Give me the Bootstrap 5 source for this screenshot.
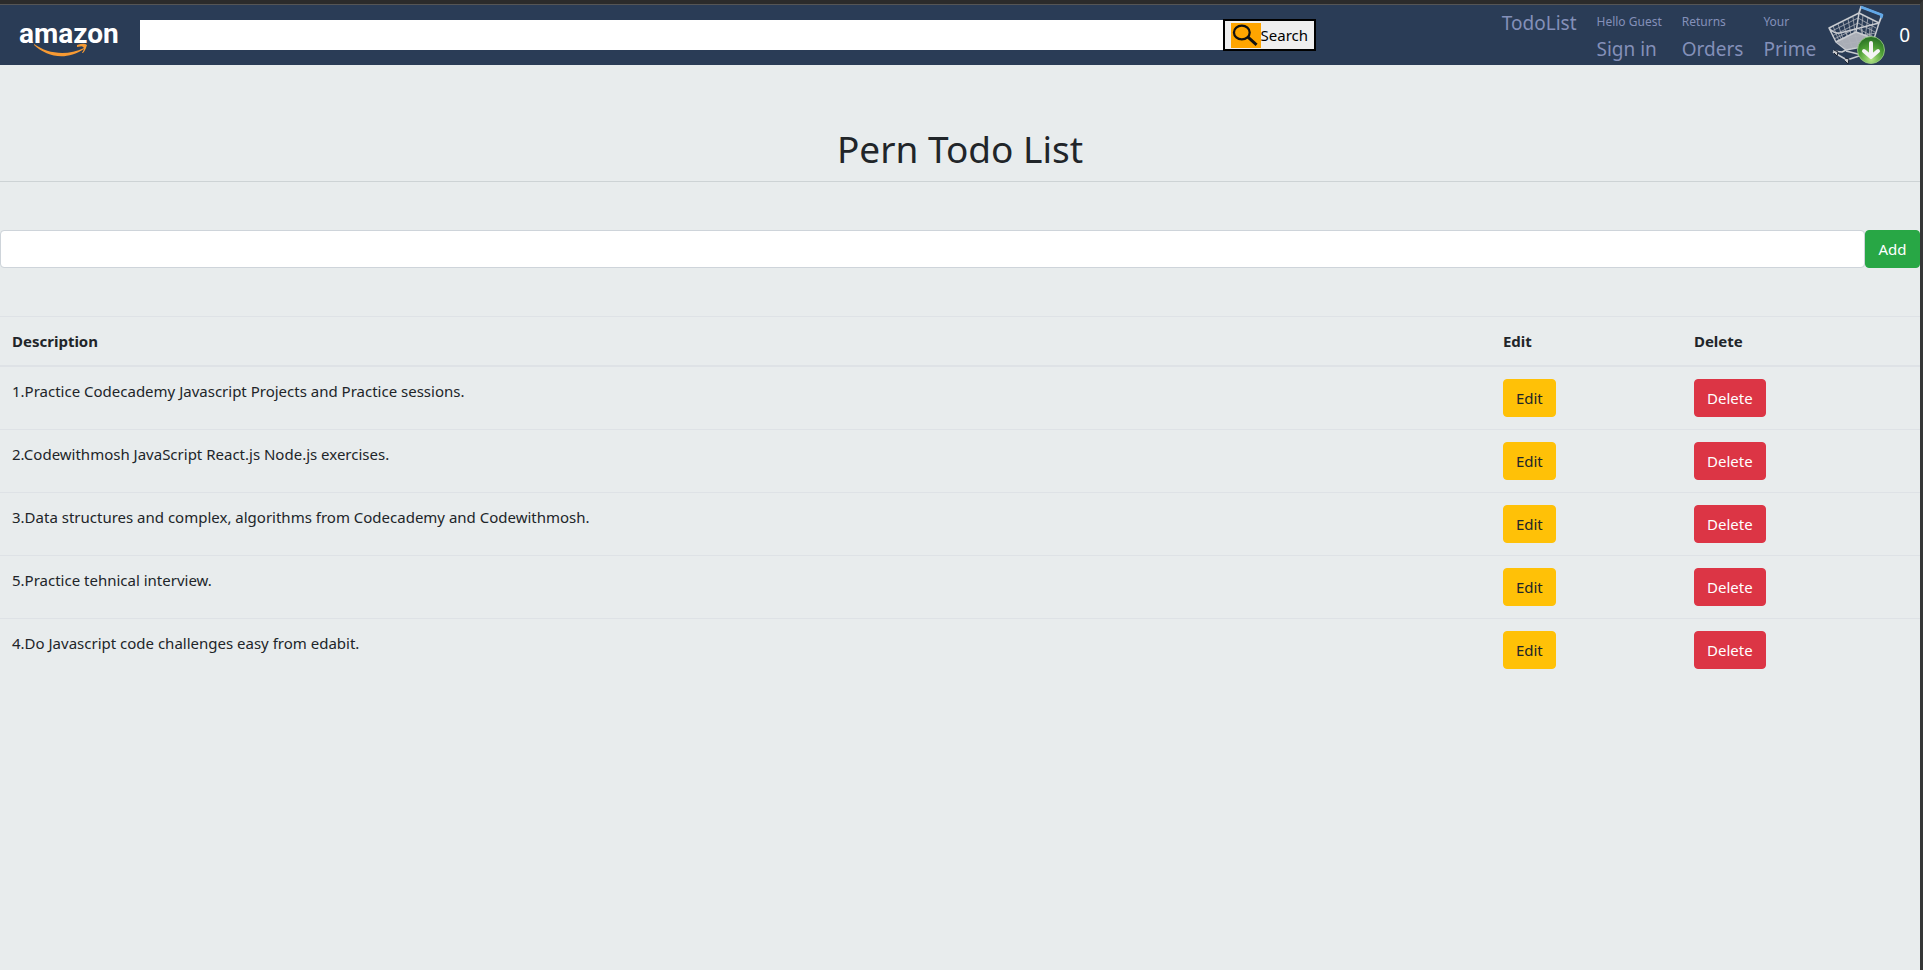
<!DOCTYPE html>
<html lang="en">
<head>
<meta charset="utf-8">
<meta name="viewport" content="width=device-width, initial-scale=1">
<title>Pern Todo List</title>
<link rel="stylesheet" href="https://cdn.jsdelivr.net/npm/bootstrap@5.3.0/dist/css/bootstrap.min.css">
<style>
  body {
    font-family: "Noto Sans", "Open Sans", sans-serif;
    font-size: 15px;
    line-height: 24px;
    color: #212529;
    background: #e8eced;
    min-height: 100vh;
    border-top: 4px solid #2b2b2b;
    border-right: 3px solid #353737;
  }
  .site-header { height: 61px; background: #2a3c56; border-top: 1px solid #555; }
  .brand { width: 140px; padding-left: 18px; }
  .brand text { font: bold 28px Roboto, "Liberation Sans", sans-serif; fill: #fff; }
  .site-search { width: 61.25%; }
  .site-search input { height: 30px; border: 0; background: #fff; outline-offset: -2px; }
  .site-search button { height: 32px; width: 93px; border: 2px solid #000; background: #efefef; color: #000; padding: 0 6px; }
  .site-search svg { background: orange; }
  .site-links { gap: 20px; margin-right: 12px; padding-top: 4px; }
  .site-links a { color: #8490b9; text-decoration: none; font-size: 19px; line-height: 28px; }
  .site-links small { display: block; font-size: 12px; line-height: 26px; }
  .cart-link { gap: 13px; margin-right: 10px; }
  .site-header .cart-link { color: #fff; text-decoration: none; font-size: 19px; }
  .page-title { font-size: 37px; line-height: 48px; font-weight: 400; border-bottom: 1px solid #cdd3d5; padding-bottom: 8px; margin: 60px 0 48px; }
  .btn, .form-control { font-size: 15px; line-height: 24px; border-radius: 4px; }
  .form-control { border-color: #ced4da; }
  .btn-success { background: #28a745; border-color: #28a745; width: 55px; padding-left: 0; padding-right: 0; }
  .btn-danger { background: #dc3545; width: 72px; padding-left: 0; padding-right: 0; }
  .btn-warning { color: #212529; width: 53px; padding-left: 0; padding-right: 0; }
  .todo-table { --bs-table-bg: transparent; color: #212529; table-layout: fixed; }
  .todo-table th, .todo-table td { padding: 12px; border: 0 solid #dee2e6; border-top-width: 1px; vertical-align: top; }
  .todo-table thead th { border-bottom-width: 2px; }
  .todo-table thead, .todo-table tbody { border: 0; }
  .col-desc { width: 77.65%; }
  .col-edit { width: 9.95%; }
</style>
</head>
<body>
<header class="site-header d-flex align-items-center">
  <a class="brand flex-shrink-0" href="#" aria-label="amazon">
    <svg width="110" height="44" viewBox="0 0 110 44" class="d-block">
      <text x="1" y="30">amazon</text>
      <path d="M16 31C30 41 49 43 66 35L64 33Q66 32 69 32L66 37L66 36C48 48 29 44 16 32Z" fill="#f79a33"/>
      <path d="M59 32Q66 30 68.500 31.500Q69 35 65 40L64 40Q67 35 66 33.500Q64 33 59 34Z" fill="#f79a33"/>
    </svg>
  </a>
  <form class="site-search d-flex align-items-center" role="search">
    <input type="text" class="flex-grow-1" aria-label="Search">
    <button type="button" class="d-flex align-items-center flex-shrink-0">
      <svg width="30" height="25" viewBox="0 0 30 25" fill="none" stroke="#111"><ellipse cx="11" cy="9.500" rx="8" ry="7" stroke-width="2.300"/><path d="M17 14l9 8" stroke-width="3"/></svg>
      <span>Search</span>
    </button>
  </form>
  <nav class="site-links d-flex ms-auto align-self-start">
    <a href="#">TodoList</a>
    <a href="#"><small>Hello Guest</small>Sign in</a>
    <a href="#"><small>Returns</small>Orders</a>
    <a href="#"><small>Your</small>Prime</a>
  </nav>
  <a class="cart-link d-flex align-items-center" href="#">
    <svg width="58" height="60" viewBox="0 0 58 60" fill="none">
      <defs>
        <radialGradient id="ball" cx=".5" cy=".85" r=".85"><stop offset="0" stop-color="#b4e487"/><stop offset=".55" stop-color="#4d9f35"/><stop offset="1" stop-color="#246b22"/></radialGradient>
      </defs>
      <path d="M8 36L27 27L42 31L40 40L18 45Z" fill="#a9adb6"/>
      <g stroke="#aeb3ba" stroke-width=".8">
        <path d="M2 27L30 13L48 23M4 31L30 18L47 27M6 34L29 23L46 32M5 21L11 36M10 19L15 34M15 17L19 32M20 14L23 30M25 12L27 28M35 10L33 30M40 12L37 33M45 15L42 36M10 28L19 45M18 27L25 44M26 26L31 43M34 24L36 42M42 22L41 40M14 34L48 28M16 39L46 34"/>
      </g>
      <g stroke="#c8cbd0" stroke-width="1.500" stroke-linejoin="round">
        <path d="M1 23L31 8L51 18L44 40L18 45L8 37ZM1 23Q6 29 12 28L51 18M31 8L28 27L8 37M28 27L44 33"/>
        <path d="M18 45L14 47L5 46M18 46L34 50L19 55M5 47L19 55"/>
      </g>
      <path d="M31 8L33 2L54 10L51 18" stroke="#c8cbd0" stroke-width="1.800"/>
      <path d="M33 2L54 10L53 13" stroke="#61a8e8" stroke-width="2.600" stroke-linejoin="round"/>
      <path d="M6 45l4 2-1 4-3-3M17 53l4 1-1 5-3-3" fill="#c8c8cc" stroke="#17202f"/>
      <circle cx="43" cy="45" r="13.500" fill="url(#ball)" stroke="#a0cf8a" stroke-width=".8"/>
      <path d="M43 38V51M36 46L43 52L50 46" stroke="#f4f4f4" stroke-width="4" stroke-linecap="round" stroke-linejoin="round"/>
    </svg>
    <span>0</span>
  </a>
</header>
<main>
  <h1 class="page-title text-center">Pern Todo List</h1>
  <form class="d-flex mb-5">
    <input type="text" class="form-control" aria-label="New todo">
    <button type="button" class="btn btn-success flex-shrink-0">Add</button>
  </form>
  <table class="table todo-table mb-0">
    <colgroup><col class="col-desc"><col class="col-edit"><col></colgroup>
    <thead><tr><th scope="col">Description</th><th scope="col">Edit</th><th scope="col">Delete</th></tr></thead>
    <tbody>
      <tr><td>1.Practice Codecademy Javascript Projects and Practice sessions.</td><td><button type="button" class="btn btn-warning">Edit</button></td><td><button type="button" class="btn btn-danger">Delete</button></td></tr>
      <tr><td>2.Codewithmosh JavaScript React.js Node.js exercises.</td><td><button type="button" class="btn btn-warning">Edit</button></td><td><button type="button" class="btn btn-danger">Delete</button></td></tr>
      <tr><td>3.Data structures and complex, algorithms from Codecademy and Codewithmosh.</td><td><button type="button" class="btn btn-warning">Edit</button></td><td><button type="button" class="btn btn-danger">Delete</button></td></tr>
      <tr><td>5.Practice tehnical interview.</td><td><button type="button" class="btn btn-warning">Edit</button></td><td><button type="button" class="btn btn-danger">Delete</button></td></tr>
      <tr><td>4.Do Javascript code challenges easy from edabit.</td><td><button type="button" class="btn btn-warning">Edit</button></td><td><button type="button" class="btn btn-danger">Delete</button></td></tr>
    </tbody>
  </table>
</main>
<script src="https://cdn.jsdelivr.net/npm/bootstrap@5.3.0/dist/js/bootstrap.bundle.min.js"></script>
</body>
</html>
